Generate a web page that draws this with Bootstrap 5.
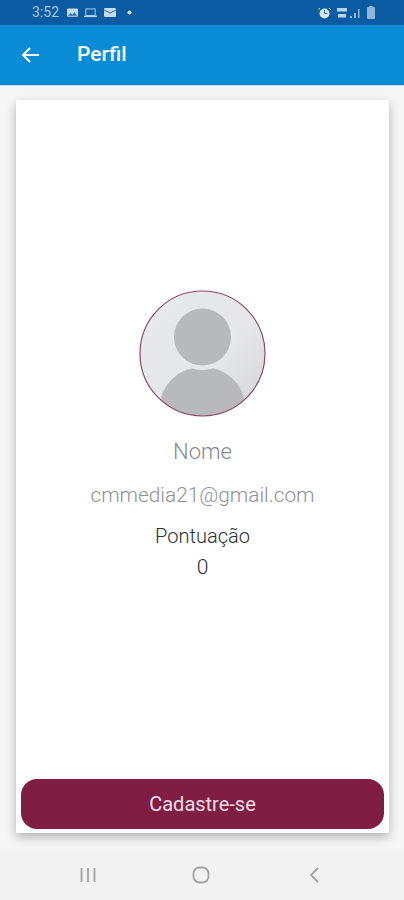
<!DOCTYPE html>
<html lang="pt">
<head>
    <meta charset="UTF-8">
    <title>Perfil</title>
    <link href="https://cdn.jsdelivr.net/npm/bootstrap@5.3.0/dist/css/bootstrap.min.css" rel="stylesheet">
    <style>
        html, body { height: 900px; overflow: hidden; }
        body { background: #f6f6f6; font-family: Roboto, "Liberation Sans", sans-serif; }
        .screen { height: 900px; }
        .status-strip { height: 25px; background: #0a5ba2; color: #a9c8e4; font-size: 14px; padding: 0 29px 0 32px; }
        .status-strip svg { display: block; }
        .app-strip { height: 59px; background: #0a8bd6; color: #fff; padding-left: 21px; box-shadow: 0 1px 1px #0b7cc0; }
        .app-title { font-size: 21px; font-weight: 500; margin-left: 37px; }
        .page-area { padding: 16px 15px 17px 16px; min-height: 0; }
        .profile-sheet { background: #fff; box-shadow: 0 4px 10px rgba(0,0,0,.28); padding: 0 5px 4px; }
        .avatar-wrap { margin-top: 190px; }
        .name-text { font-size: 22px; font-weight: 300; color: #85888a; margin-top: 20px; line-height: 30px; }
        .mail-text { font-size: 20.8px; font-weight: 300; color: #8f9193; margin-top: 15px; line-height: 26px; }
        .score-label { font-size: 20px; font-weight: 300; color: #263238; margin-top: 15px; line-height: 26px; }
        .score-value { font-size: 21px; font-weight: 300; color: #263238; margin-top: 5px; line-height: 26px; }
        .signup-btn { height: 50px; background: #801d43; border: 0; border-radius: 16px; color: #f3dfe6; font-size: 20px; }
        .signup-btn:hover { background: #801d43; color: #f3dfe6; }
        .nav-strip { height: 50px; background: #f2f2f2; padding: 0 84px 0 79px; }
    </style>
</head>
<body>
<div class="screen d-flex flex-column">
    <div class="status-strip d-flex align-items-center flex-shrink-0">
        <span>3:52</span>
        <svg style="margin-left:8px" width="11" height="10" viewBox="0 0 12 10"><rect width="12" height="9" rx="1" fill="#c5dbee"/><path d="M1 8l3-3 2 2 2-3 3 4z" fill="#2c6fae"/></svg>
        <svg style="margin-left:6px" width="13" height="10" viewBox="0 0 14 10"><rect x="2" y=".6" width="10" height="7" fill="none" stroke="#b9d3ea"/><rect y="8" width="14" height="1.4" fill="#b9d3ea"/></svg>
        <svg style="margin-left:7px" width="12" height="10" viewBox="0 0 12 10"><rect width="12" height="9" rx="1" fill="#c5dbee"/><path d="M0 2l6 3 6-3" fill="none" stroke="#2c6fae"/></svg>
        <svg style="margin-left:11px" width="5" height="5" viewBox="0 0 5 5"><circle cx="2.500" cy="2.500" r="2" fill="#d5e4f2"/></svg>
        <svg class="ms-auto" width="13" height="12" viewBox="0 0 13 12"><circle cx="6.500" cy="6.500" r="5" fill="#dbe8f4"/><path d="M6.500 3v3.500h3" fill="none" stroke="#2c6fae"/><path d="M0 3l2-2M13 3l-2-2" stroke="#dbe8f4"/></svg>
        <svg style="margin-left:6px" width="10" height="12" viewBox="0 0 10 12"><rect y="1" width="10" height="3.500" fill="#b9d3ea"/><rect x="1" y="7" width="8" height="3.500" fill="#b9d3ea"/></svg>
        <svg style="margin-left:3px" width="11" height="10" viewBox="0 0 11 10"><path d="M0 8h2v2H0zM4 5h2v5H4zM8 1h1.500v9H8z" fill="#8fb6da"/></svg>
        <svg style="margin-left:6px" width="8" height="13" viewBox="0 0 8 13"><rect y="1" width="8" height="12" rx="1" fill="#8fb6da"/><rect x="2" width="4" height="2" fill="#8fb6da"/></svg>
    </div>
    <div class="app-strip d-flex align-items-center flex-shrink-0">
        <svg width="19" height="18" viewBox="0 0 19 18"><path d="M18 9H2M9 2L2 9l7 7" fill="none" stroke="#fff" stroke-width="2"/></svg>
        <span class="app-title">Perfil</span>
    </div>
    <div class="page-area flex-grow-1 d-flex flex-column">
        <div class="profile-sheet flex-grow-1 d-flex flex-column text-center">
            <div class="avatar-wrap">
                <svg class="d-block mx-auto" width="127" height="127" viewBox="0 0 127 127">
                    <defs>
                        <linearGradient id="avatarBg" x1="0" y1="0" x2="1" y2="1">
                            <stop offset="0" stop-color="#e8ebed"/>
                            <stop offset=".6" stop-color="#e4e6e8"/>
                            <stop offset="1" stop-color="#d0d2d4"/>
                        </linearGradient>
                        <clipPath id="avatarClip"><circle cx="63.500" cy="63.500" r="62.500"/></clipPath>
                    </defs>
                    <circle cx="63.500" cy="63.500" r="62.500" fill="url(#avatarBg)"/>
                    <g clip-path="url(#avatarClip)">
                        <ellipse cx="63.500" cy="118" rx="43" ry="41" fill="#b7b9bb"/>
                        <circle cx="63.500" cy="47" r="33" fill="#e5e7e9"/>
                        <circle cx="63.500" cy="47" r="28.500" fill="#b7b9bb"/>
                    </g>
                    <circle cx="63.500" cy="63.500" r="62.500" fill="none" stroke="#8f4a66" stroke-width="1.200"/>
                </svg>
            </div>
            <div class="name-text">Nome</div>
            <div class="mail-text">cmmedia21@gmail.com</div>
            <div class="score-label">Pontuação</div>
            <div class="score-value">0</div>
            <button type="button" class="btn signup-btn w-100 mt-auto">Cadastre-se</button>
        </div>
    </div>
    <div class="nav-strip d-flex align-items-center justify-content-between flex-shrink-0">
        <svg width="18" height="16" viewBox="0 0 18 16"><path d="M2.500 1v14M9 1v14M15.500 1v14" stroke="#a3a3a3" stroke-width="1.800" fill="none"/></svg>
        <svg width="18" height="18" viewBox="0 0 18 18"><rect x="1.500" y="1.500" width="15" height="15" rx="6" fill="none" stroke="#a3a3a3" stroke-width="1.800"/></svg>
        <svg width="16" height="16" viewBox="0 0 16 16"><path d="M14 1L7 8l7 7" stroke="#a3a3a3" stroke-width="1.800" fill="none"/></svg>
    </div>
</div>
<script src="https://cdn.jsdelivr.net/npm/bootstrap@5.3.0/dist/js/bootstrap.bundle.min.js"></script>
</body>
</html>
